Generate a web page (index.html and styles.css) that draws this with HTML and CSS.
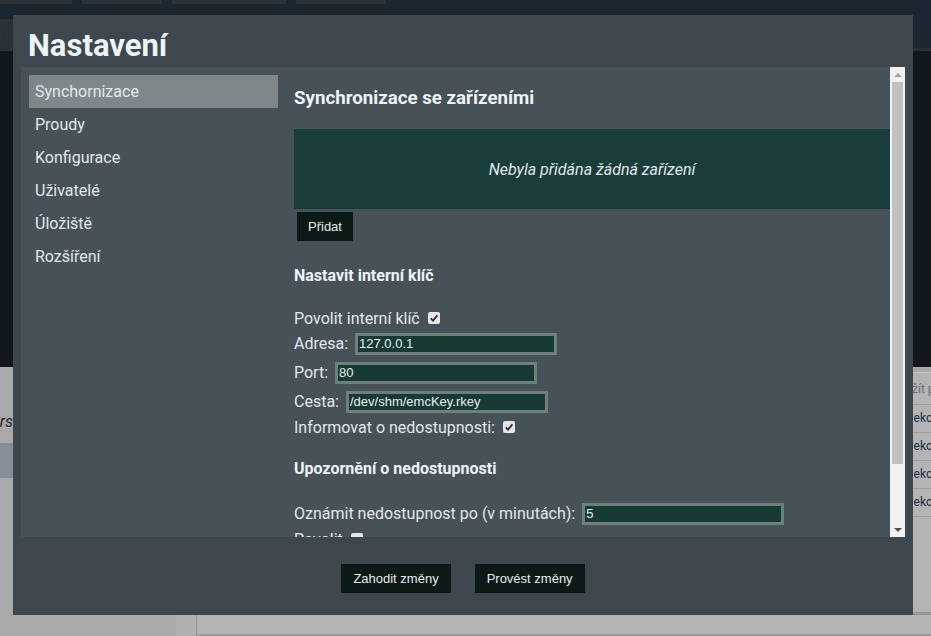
FILE: index.html
```html
<!DOCTYPE html>
<html lang="cs">
<head>
<meta charset="utf-8">
<title>Nastavení</title>
<link rel="stylesheet" href="styles.css">
</head>
<body>
<div class="page">
  <div class="page-top">
    <div class="tabs">
      <span class="tab tab-a"></span>
      <span class="tab tab-b"></span>
      <span class="tab tab-c"></span>
      <span class="tab tab-d"></span>
    </div>
    <div class="nav-row">
      <div class="nav-btn">‹</div>
    </div>
    <div class="dark-band"></div>
  </div>
  <div class="page-bottom">
    <div class="pb-main">
      <div class="pb-left">
        <div class="pb-title"><span>Senzors</span></div>
        <div class="pb-bar"></div>
      </div>
      <div class="pb-spacer"></div>
      <div class="pb-right">
        <div class="tbl">
          <div class="tbl-head">Použít p</div>
          <div class="tbl-row">Nekolik</div>
          <div class="tbl-row">Nekolik</div>
          <div class="tbl-row">Nekolik</div>
          <div class="tbl-row">Nekolik</div>
        </div>
      </div>
    </div>
    <div class="pb-foot">
      <div class="pf-left"></div>
      <div class="pf-mid"></div>
      <div class="pf-box"></div>
    </div>
  </div>
</div>

<div class="modal">
  <h1 class="modal-title">Nastavení</h1>
  <div class="panel">
    <div class="panel-scroll">
      <nav class="sidebar">
        <div class="side-item active">Synchornizace</div>
        <div class="side-item">Proudy</div>
        <div class="side-item">Konfigurace</div>
        <div class="side-item">Uživatelé</div>
        <div class="side-item">Úložiště</div>
        <div class="side-item">Rozšíření</div>
      </nav>
      <div class="content">
        <h2 class="section-title">Synchronizace se zařízeními</h2>
        <div class="empty-box">Nebyla přidána žádná zařízení</div>
        <button class="btn btn-add">Přidat</button>

        <h3 class="sub-title first">Nastavit interní klíč</h3>
        <div class="row row-check">
          <span class="label">Povolit interní klíč</span>
          <svg class="cb" width="12" height="12" viewBox="0 0 12 12"><rect x="0" y="0" width="12" height="12" rx="2" fill="#e6e6e6"/><path d="M2.8 6.3 L5 8.6 L9.4 3.4" fill="none" stroke="#2e2e2e" stroke-width="1.8"/></svg>
        </div>
        <div class="row row-input">
          <span class="label">Adresa:</span>
          <span class="input">127.0.0.1</span>
        </div>
        <div class="row row-input">
          <span class="label">Port:</span>
          <span class="input">80</span>
        </div>
        <div class="row row-input">
          <span class="label">Cesta:</span>
          <span class="input">/dev/shm/emcKey.rkey</span>
        </div>
        <div class="row row-check">
          <span class="label">Informovat o nedostupnosti:</span>
          <svg class="cb" width="12" height="12" viewBox="0 0 12 12"><rect x="0" y="0" width="12" height="12" rx="2" fill="#e6e6e6"/><path d="M2.8 6.3 L5 8.6 L9.4 3.4" fill="none" stroke="#2e2e2e" stroke-width="1.8"/></svg>
        </div>

        <h3 class="sub-title">Upozornění o nedostupnosti</h3>
        <div class="row row-input">
          <span class="label">Oznámit nedostupnost po (v minutách):</span>
          <span class="input">5</span>
        </div>
        <div class="row row-check">
          <span class="label">Povolit</span>
          <svg class="cb" width="12" height="12" viewBox="0 0 12 12"><rect x="0" y="0" width="12" height="12" rx="2" fill="#e6e6e6"/></svg>
        </div>
      </div>
    </div>
    <div class="scrollbar">
      <div class="sb-btn"><span class="sb-arrow-up"></span></div>
      <div class="sb-track">
        <div class="sb-thumb"></div>
      </div>
      <div class="sb-btn"><span class="sb-arrow-down"></span></div>
    </div>
  </div>
  <div class="modal-footer">
    <button class="btn btn-foot">Zahodit změny</button>
    <button class="btn btn-foot">Provést změny</button>
  </div>
</div>
</body>
</html>
```

FILE: styles.css
```css
* { box-sizing: border-box; }

html, body {
  margin: 0;
  padding: 0;
}

body {
  width: 931px;
  height: 636px;
  overflow: hidden;
  position: relative;
  background: #1b2730;
  font-family: Roboto, "Liberation Sans", sans-serif;
}

/* ---------- background page ---------- */
.page {
  display: flex;
  flex-direction: column;
  height: 636px;
}

.page-top {
  height: 367px;
  display: flex;
  flex-direction: column;
  background: #1b2730;
}

.tabs {
  height: 4px;
  display: flex;
  gap: 10px;
}

.tab { background: #2b3338; height: 4px; }
.tab-a { width: 72px; }
.tab-b { width: 80px; }
.tab-c { width: 114px; }
.tab-d { width: 90px; }

.nav-row {
  height: 47px;
  border-bottom: 3px solid #2b3135;
}

.nav-btn {
  margin-top: 15px;
  width: 40px;
  height: 32px;
  background: #2b3134;
  color: #8a9096;
  font-size: 12px;
  line-height: 32px;
  padding-left: 0;
  text-indent: -3px;
}

.dark-band {
  flex: 1;
  background: #12171b;
}

.page-bottom {
  flex: 1;
  display: flex;
  flex-direction: column;
  background: #a9a9a9;
}

.pb-main {
  flex: 1;
  display: flex;
}

.pb-left {
  width: 13px;
  padding-top: 45px;
}

.pb-title {
  width: 13px;
  display: flex;
  justify-content: flex-end;
  font-style: italic;
  font-size: 16px;
  line-height: 19px;
  color: #262a2e;
  white-space: nowrap;
}

.pb-bar {
  margin-top: 12px;
  height: 35px;
  background: #898d97;
}

.pb-spacer { flex: 1; }

.pb-right {
  width: 40px;
  padding-top: 5px;
  background: linear-gradient(#a9a9a9 0 5px, #b4b4b4 5px);
}

.tbl {
  border-top: 1px solid #c6c6c6;
  font-size: 12px;
  white-space: nowrap;
  overflow: hidden;
}

.tbl-head {
  height: 32px;
  line-height: 32px;
  color: #6b6f7a;
  border-bottom: 1px solid #9c9c9c;
  padding-left: 0;
}

.tbl-row {
  height: 28px;
  line-height: 27px;
  color: #1d2a47;
  border-bottom: 1px solid #9c9c9c;
  padding-left: 14px;
}

.pb-foot {
  height: 24px;
  display: flex;
}

.pf-left { width: 176px; background: #a9a9a9; }
.pf-mid { width: 20px; background: #b0b0b0; }
.pf-box {
  flex: 1;
  background: #b3b3b3;
  border-top: 3px solid #979797;
  border-left: 1px solid #939393;
  border-bottom: 2px solid #9a9a9a;
}

/* ---------- modal ---------- */
.modal {
  position: absolute;
  left: 13px;
  top: 15px;
  width: 900px;
  height: 600px;
  background: #3d474d;
  display: flex;
  flex-direction: column;
}

.modal-title {
  margin: 0;
  height: 52px;
  padding: 12px 15px 3px;
  font-size: 31px;
  line-height: 37px;
  font-weight: 700;
  color: #eef3f6;
}

.panel {
  margin: 0 8px;
  height: 470px;
  flex: none;
  background: #475258;
  display: flex;
}

.panel-scroll {
  flex: 1;
  display: flex;
  align-items: flex-start;
  overflow: hidden;
}

.scrollbar {
  width: 15px;
  flex: none;
  display: flex;
  flex-direction: column;
  background: #f1f1f1;
}

.sb-btn {
  height: 15px;
  flex: none;
  display: flex;
  align-items: center;
  justify-content: center;
}

.sb-arrow-up {
  width: 0;
  height: 0;
  border-left: 4px solid transparent;
  border-right: 4px solid transparent;
  border-bottom: 4px solid #a3a3a3;
}

.sb-arrow-down {
  width: 0;
  height: 0;
  border-left: 4px solid transparent;
  border-right: 4px solid transparent;
  border-top: 4px solid #505050;
}

.sb-track {
  flex: 1;
  padding: 0 2px;
}

.sb-thumb {
  height: 382px;
  background: #c1c1c1;
}

.sidebar {
  width: 249px;
  flex: none;
  margin: 8px 0 0 8px;
}

.side-item {
  height: 33px;
  padding: 7px 6px;
  font-size: 16px;
  line-height: 19px;
  color: #e1e7eb;
}

.side-item.active {
  background: #7f8789;
}

.content {
  flex: 1;
  margin-left: 16px;
  padding: 20px 0 58px;
  color: #e1e7eb;
}

.section-title {
  margin: 0 0 20px;
  font-size: 18.72px;
  line-height: 22px;
  font-weight: 700;
  color: #eef3f6;
}

.empty-box {
  height: 80px;
  background: #183d3a;
  display: flex;
  align-items: center;
  justify-content: center;
  font-style: italic;
  font-size: 16px;
  color: #e1e7eb;
}

.btn {
  display: block;
  border: 0;
  background: #0b1a17;
  color: #e6ecef;
  font-family: "Liberation Sans", Arial, sans-serif;
  font-size: 13px;
  height: 29px;
  line-height: 29px;
  padding: 0 11px;
  cursor: pointer;
}

.btn-add {
  margin: 3px 0 0 3px;
}

.sub-title {
  margin: 22px 0 21px;
  font-size: 16px;
  line-height: 18px;
  font-weight: 700;
  color: #eef3f6;
}

.sub-title.first {
  margin-top: 26px;
  margin-bottom: 22px;
}

.row {
  display: flex;
  align-items: center;
  font-size: 16px;
  line-height: 19px;
}

.row-check {
  height: 22px;
  gap: 8px;
}

.row-input {
  height: 29px;
  gap: 7px;
}

.label {
  white-space: nowrap;
}

.cb {
  display: block;
  flex: none;
}

.input {
  display: block;
  width: 202px;
  height: 22px;
  border: 3px solid #6e8079;
  background: #183a34;
  color: #e8eef0;
  font-family: "Liberation Sans", Arial, sans-serif;
  font-size: 13px;
  line-height: 16px;
  padding: 0 1px;
  white-space: nowrap;
  overflow: hidden;
}

.modal-footer {
  flex: 1;
  display: flex;
  justify-content: center;
  align-items: flex-start;
  gap: 24px;
  padding-top: 27px;
}

.btn-foot {
  padding: 0 12px;
}
```
